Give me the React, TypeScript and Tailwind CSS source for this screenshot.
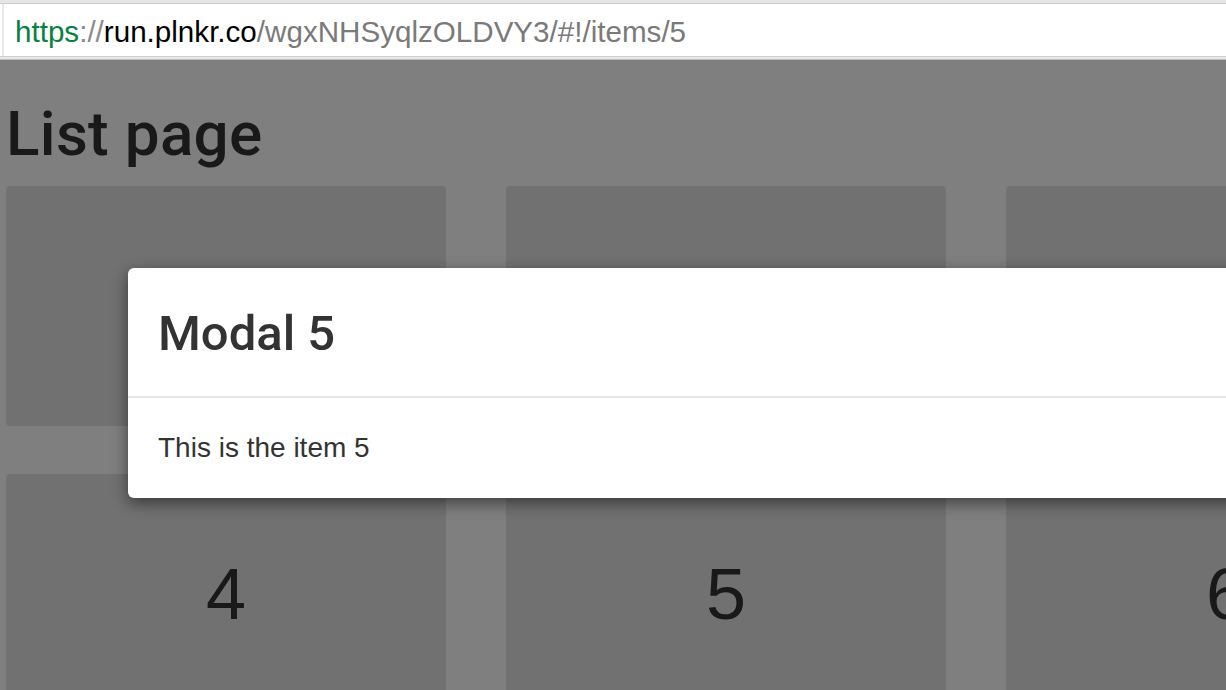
const items = [1, 2, 3, 4, 5, 6];

function UrlBar() {
  return (
    <div className="relative h-[60px] bg-white">
      <div className="h-[3px] bg-[#e6e6e6]" />
      <div className="h-px bg-[#cdcdcd]" />
      <div className="flex h-[52px] items-center border-l-2 border-[#e8e8e8] ml-[2px]">
        <div className="pl-[11px] pt-[4px] text-[29.6px] leading-none whitespace-nowrap">
          <span className="text-[#0b8043]">https</span>
          <span className="text-[#8a8a8a]">://</span>
          <span className="text-black">run.plnkr.co</span>
          <span className="text-[#7a7a7a]">/wgxNHSyqlzOLDVY3/#!/items/5</span>
        </div>
      </div>
      <div className="absolute bottom-0 left-0 right-0">
        <div className="h-px bg-[#cfcfcf]" />
        <div className="h-[2px] bg-[#e9e9e9]" />
        <div className="h-px bg-[#bdbdbd]" />
      </div>
    </div>
  );
}

function Card({ n }: { n: number }) {
  return (
    <div className="flex h-[240px] w-[440px] items-center justify-center rounded-[4px] bg-[#e3e3e3] text-[72px] text-[#333]">
      {n}
    </div>
  );
}

export default function App() {
  return (
    <div
      className="relative h-[690px] w-[1226px] overflow-hidden bg-white"
      style={{ fontFamily: '"Liberation Sans", Arial, sans-serif' }}
    >
      <UrlBar />

      <div className="relative h-[630px] overflow-hidden">
        <div className="pl-[6px]">
          <h1 className="mt-[41px] font-['Roboto',sans-serif] text-[62px] font-medium leading-[66px] tracking-[0.3px] text-[#333]">
            List page
          </h1>
          <div className="mt-[19px] grid w-[1440px] grid-cols-[440px_440px_440px] gap-x-[60px] gap-y-[48px]">
            {items.map((n) => (
              <Card key={n} n={n} />
            ))}
          </div>
        </div>

        {/* backdrop */}
        <div className="absolute inset-0 bg-black/50" />

        {/* modal */}
        <div className="absolute left-[128px] top-[208px] w-[1180px] rounded-[6px] bg-white shadow-[0_5px_15px_rgba(0,0,0,0.5)]">
          <div className="h-[130px] border-b-2 border-[#e5e5e5] px-[30px] pt-[30px]">
            <h4 className="font-['Roboto',sans-serif] text-[49px] font-medium leading-[71px] text-[#333]">Modal 5</h4>
          </div>
          <div className="px-[30px] pt-[30px] pb-[30px]">
            <p className="text-[28px] leading-[40px] text-[#333]">This is the item 5</p>
          </div>
        </div>
      </div>
    </div>
  );
}
